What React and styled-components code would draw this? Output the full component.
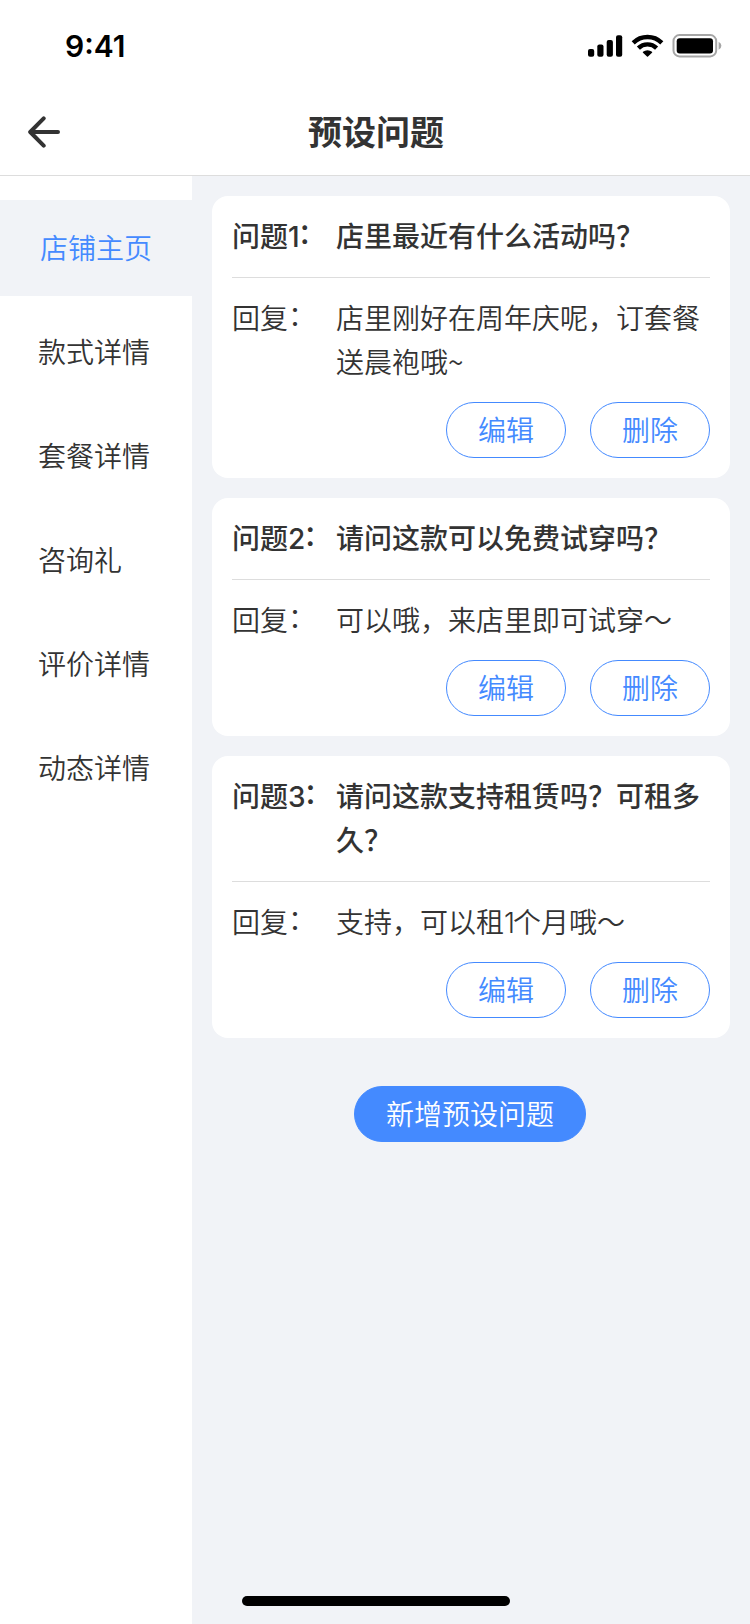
import * as React from 'react';
import styled, { createGlobalStyle, css } from 'styled-components';

const GlobalStyle = createGlobalStyle`
  :root {
    --blue: #448aff;
    --text: #333;
    --line: #ddd;
    --page: #f1f3f7;
  }

  * {
    box-sizing: border-box;
  }

  body {
    margin: 0;
    color: var(--text);
    font-family: 'Noto Sans CJK SC', sans-serif;
    font-size: 28px;
    font-weight: 350;
    line-height: 44px;
  }

  button {
    margin: 0;
    padding: 0;
    font: inherit;
  }
`;

const Screen = styled.div`
  display: flex;
  flex-direction: column;
  position: relative;
  width: 750px;
  height: 1624px;
  overflow: hidden;
  background: #fff;
`;

const StatusBar = styled.div`
  display: flex;
  flex: none;
  align-items: center;
  justify-content: space-between;
  height: 88px;
  padding: 4px 28px 0 65px;
`;

const Time = styled.span`
  padding-bottom: 1px;
  color: #000;
  font-family: Inter, sans-serif;
  font-size: 30px;
  font-weight: 600;
`;

const StatusIcons = styled.svg`
  display: block;
`;

const NavBar = styled.header`
  display: grid;
  flex: none;
  grid-template-columns: 60px 1fr 60px;
  align-items: center;
  height: 88px;
  padding: 0 14px 0 16px;
  border-bottom: 1px solid var(--line);
`;

const BackButton = styled.button`
  display: flex;
  align-items: center;
  height: 60px;
  padding-left: 12px;
  border: 0;
  background: none;
  color: var(--text);
`;

const Title = styled.h1`
  margin: 0;
  padding-bottom: 2px;
  font-size: 34px;
  font-weight: 700;
  line-height: 48px;
  text-align: center;
`;

const Body = styled.div`
  display: flex;
  flex: 1;
  min-height: 0;
`;

const Sidebar = styled.nav`
  display: flex;
  flex: none;
  flex-direction: column;
  gap: 8px;
  width: 192px;
  padding-top: 24px;
`;

const SidebarItem = styled.a`
  display: flex;
  align-items: center;
  height: 96px;
  padding: 0 0 2px 38px;

  ${props => props.$active
    && css`
      padding-left: 40px;
      background: var(--page);
      color: var(--blue);
    `};
`;

const Content = styled.main`
  display: flex;
  flex: 1;
  flex-direction: column;
  gap: 20px;
  padding: 20px;
  background: var(--page);
`;

const Card = styled.section`
  padding: 0 20px 20px;
  border-radius: 16px;
  background: #fff;
`;

const Row = styled.div`
  display: flex;
`;

const Question = styled(Row)`
  padding: 17px 0 20px;
  border-bottom: 1px solid var(--line);
  font-weight: 500;
`;

const Reply = styled(Row)`
  padding: 17px 0 19px;
`;

const Label = styled.div`
  flex: none;
  width: 104px;
  white-space: nowrap;
`;

const Value = styled.div`
  flex: 1;
`;

const Digit = styled.span`
  margin-right: -2px;
  font-family: Inter, sans-serif;
  line-height: 0;
`;

const Colon = styled.span`
  line-height: 0;
  vertical-align: 3px;
`;

const Actions = styled.div`
  display: flex;
  justify-content: flex-end;
  gap: 24px;
`;

const PillButton = styled.button`
  width: 120px;
  height: 56px;
  padding-bottom: 2px;
  border: 1px solid var(--blue);
  border-radius: 28px;
  background: #fff;
  color: var(--blue);
`;

const AddButton = styled(PillButton)`
  align-self: center;
  width: 232px;
  margin: 28px 2px 0 0;
  background: var(--blue);
  color: #fff;
`;

const HomeIndicator = styled.div`
  position: absolute;
  bottom: 18px;
  left: 242px;
  width: 268px;
  height: 10px;
  border-radius: 5px;
  background: #000;
`;

const TABS = ['店铺主页', '款式详情', '套餐详情', '咨询礼', '评价详情', '动态详情'];

const QUESTIONS = [
  { question: '店里最近有什么活动吗？', reply: '店里刚好在周年庆呢，订套餐送晨袍哦~' },
  { question: '请问这款可以免费试穿吗？', reply: '可以哦，来店里即可试穿～' },
  { question: '请问这款支持租赁吗？可租多久？', reply: '支持，可以租1个月哦～' },
];

// Digits are set in Inter, everything else stays in the CJK face
function renderText(text) {
  return text.split(/(\d+)/).map((part, i) => (
    /^\d+$/.test(part) ? <Digit key={i}>{part}</Digit> : part
  ));
}

const BackIcon = () => (
  <svg width="32" height="32" viewBox="0 0 32 32" fill="none" stroke="currentColor" strokeWidth="4" strokeLinecap="round" strokeLinejoin="round">
    <path d="M30 16H2.5M15.7 2.3 2.2 16l13.5 13.7" />
  </svg>
);

const Status = () => (
  <StatusIcons width="134" height="24" viewBox="0 0 134 24">
    <rect x="0" y="15" width="6.2" height="7.8" rx="2" />
    <rect x="9.3" y="10.6" width="6.2" height="12.2" rx="2" />
    <rect x="18.7" y="6" width="6.2" height="16.8" rx="2" />
    <rect x="28" y="1.2" width="6.2" height="21.6" rx="2" />
    <g fill="none" stroke="#000" strokeWidth="4.4">
      <path d="M45.2 8.9a20.4 20.4 0 0 1 28.6 0" />
      <path d="M50.4 14.1a13 13 0 0 1 18.2 0" />
    </g>
    <path d="M55 17.8a7 7 0 0 1 9 0q.5.5 0 1l-4 3.7q-.5.5-1 0l-4-3.7q-.5-.5 0-1z" />
    <rect x="85.5" y="1.1" width="42.7" height="21.3" rx="6" fill="none" stroke="#a6a6a6" strokeWidth="2" />
    <rect x="88.7" y="4.2" width="36.3" height="15.2" rx="3" />
    <path d="M130.6 7.8v8q2.8-1.3 2.8-4t-2.8-4z" fill="#a6a6a6" />
  </StatusIcons>
);

const QuestionCard = ({ index, question, reply }) => (
  <Card>
    <Question>
      <Label>
        {renderText(`问题${index}`)}
        <Colon>：</Colon>
      </Label>
      <Value>{question}</Value>
    </Question>
    <Reply>
      <Label>
        回复
        <Colon>：</Colon>
      </Label>
      <Value>{renderText(reply)}</Value>
    </Reply>
    <Actions>
      <PillButton>编辑</PillButton>
      <PillButton>删除</PillButton>
    </Actions>
  </Card>
);

const App = () => (
  <>
    <GlobalStyle />
    <Screen>
      <StatusBar>
        <Time>9:41</Time>
        <Status />
      </StatusBar>
      <NavBar>
        <BackButton aria-label="返回">
          <BackIcon />
        </BackButton>
        <Title>预设问题</Title>
      </NavBar>
      <Body>
        <Sidebar>
          {TABS.map((tab, i) => (
            <SidebarItem key={tab} $active={i === 0}>{tab}</SidebarItem>
          ))}
        </Sidebar>
        <Content>
          {QUESTIONS.map((item, i) => (
            <QuestionCard key={item.question} index={i + 1} {...item} />
          ))}
          <AddButton>新增预设问题</AddButton>
        </Content>
      </Body>
      <HomeIndicator />
    </Screen>
  </>
);

export default App;
